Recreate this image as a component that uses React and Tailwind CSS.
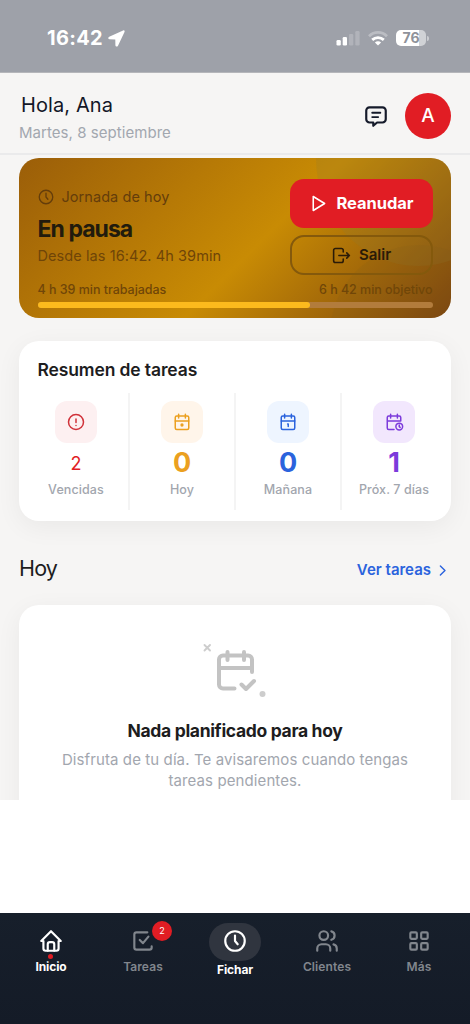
import React from 'react';
import clsx from 'clsx';

const Icon = ({ size = 24, stroke = 2, className, children }) => (
    <svg
        width={size}
        height={size}
        viewBox="0 0 24 24"
        fill="none"
        stroke="currentColor"
        strokeWidth={stroke}
        strokeLinecap="round"
        strokeLinejoin="round"
        className={clsx('shrink-0 overflow-visible', className)}
    >
        {children}
    </svg>
);

const ClockIcon = (props) => (
    <Icon {...props}>
        <circle cx="12" cy="12" r="9" />
        <path d="M12 7v5l2.5 3" />
    </Icon>
);

const StatusBar = () => (
    <div className="flex h-[73px] items-start justify-between border-b border-[#b5b6ba] bg-[#9ea1a9] pt-[25px] pr-[41px] pl-[47px] text-white">
        <div className="flex h-[26px] items-center gap-[5px]">
            <span className="text-[20px] font-bold leading-[26px] tracking-[0.3px]">16:42</span>
            <svg width="17" height="17" viewBox="0 0 17 17" fill="currentColor">
                <path d="M15.1.5 1.2 6.7C-.2 7.4-.1 9.2 1.5 9.3L7 9.5c.2 0 .3.1.3.3l.1 5.4c.1 1.6 1.9 1.9 2.6.5L16.500 1.9C17 .8 16.200 0 15.100.5Z" />
            </svg>
        </div>
        <div className="flex h-[26px] items-center">
            <svg width="24" height="16" viewBox="0 0 24 16" fill="currentColor">
                <rect x="0.5" y="10" width="4.300" height="5.500" rx="1.300" />
                <rect x="6.700" y="7" width="4.300" height="8.500" rx="1.300" />
                <rect x="13" y="4" width="4.300" height="11.500" rx="1.300" opacity=".2" />
                <rect x="19.300" y="1" width="4.300" height="14.500" rx="1.300" opacity=".2" />
            </svg>
            <svg width="20" height="15" viewBox="0 0 20 15" fill="none" stroke="currentColor" strokeWidth="2.800" className="ml-[8px]">
                <path d="M1 5.200c5.200-5 12.800-5 18 0" opacity=".3" />
                <path d="M4.200 8.900c3.400-3.100 8.200-3.100 11.600 0" />
                <path d="M10 14.500 6.900 11.500c1.800-1.600 4.400-1.600 6.200 0Z" fill="currentColor" stroke="none" />
            </svg>
            <div className="ml-[8px] flex h-[16px] w-[30px] items-center justify-center rounded-[5px] bg-[linear-gradient(90deg,#fff_76%,#d0d2d6_76%)]">
                <span className="text-[14px] font-bold leading-[16px] text-[#8f929a]">76</span>
            </div>
            <span className="ml-[1px] h-[5px] w-[2px] rounded-r-full bg-[#cbcdd1]" />
        </div>
    </div>
);

const Header = () => (
    <header className="flex h-[82px] items-center justify-between border-b-2 border-[#eaeaeb] px-[19px]">
        <div className="mt-[12px]">
            <h1 className="ml-[2px] text-[20px] leading-[27px] tracking-[0.1px] text-[#131727]">Hola, Ana</h1>
            <p className="text-[15px] leading-[27px] tracking-[0.05px] text-[#a2a7af]">Martes, 8 septiembre</p>
        </div>
        <div className="mt-[6px] flex items-center gap-[16px]">
            <Icon size={26} className="text-[#151a2a]">
                <path d="M8.500 9h7.500M8.500 13h5.500" strokeWidth="1.700" />
                <path d="M18 4a3 3 0 0 1 3 3v8a3 3 0 0 1-3 3h-5l-3.500 3v-3H6a3 3 0 0 1-3-3V7a3 3 0 0 1 3-3h12z" />
            </Icon>
            <div className="flex h-[46px] w-[46px] items-center justify-center rounded-full bg-[#e11d24] text-[19px] font-medium text-white">
                A
            </div>
        </div>
    </header>
);

const ShiftCard = () => (
    <section className="relative h-[160px] overflow-hidden rounded-[20px] bg-[linear-gradient(135deg,#9b5e09_0%,#c88b04_55%,#7c450f_100%)] pr-[18.500px] pl-[18.500px] pt-[21px]">
        {/* decorative circles */}
        <svg className="absolute inset-0" width="432" height="160" viewBox="0 0 432 160" fill="#8c7c35">
            <ellipse cx="399" cy="0" rx="102" ry="108" opacity=".21" />
            <ellipse cx="400" cy="177" rx="89" ry="90" fill="#7d5a20" opacity=".13" />
        </svg>
        <div className="relative flex justify-between">
            <div>
                <div className="mt-[7px] -ml-px flex h-[22px] items-center gap-[7px] text-[#643d0b]">
                    <ClockIcon size={18} stroke={1.8} />
                    <span className="text-[14.500px] leading-[22px] tracking-[0.06px]">Jornada de hoy</span>
                </div>
                <h2 className="mt-[7px] text-[23px] font-bold leading-[28px] tracking-[-0.95px] text-[#211b0d]">En pausa</h2>
                <p className="mt-[2px] text-[14.500px] leading-[22px] tracking-[0.08px] text-[#6f4508]">Desde las 16:42. 4h 39min</p>
            </div>
            <div className="flex w-[143px] flex-col gap-[7px]">
                <button className="flex h-[49px] items-center justify-center gap-[7px] rounded-[14px] bg-[#e11d24] text-[16.500px] font-bold tracking-[-0.05px] text-white">
                    <Icon size={21} stroke={1.8}>
                        <path d="M6 4v16l13-8z" />
                    </Icon>
                    Reanudar
                </button>
                <button className="flex h-[40px] items-center justify-center gap-[7px] rounded-[14px] border-2 border-[#84590c] pt-px text-[15px] font-semibold text-[#2a1b08]">
                    <Icon size={21} stroke={1.8}>
                        <path d="M14 8V6a2 2 0 0 0-2-2H5a2 2 0 0 0-2 2v12a2 2 0 0 0 2 2h7a2 2 0 0 0 2-2v-2" />
                        <path d="M9 12h12l-3-3M18 15l3-3" />
                    </Icon>
                    Salir
                </button>
            </div>
        </div>
        <div className="relative mt-[5px] flex justify-between text-[12.500px] font-medium leading-[20px] tracking-[-0.03px] text-[#704608]">
            <span>4 h 39 min trabajadas</span>
            <span>6 h 42 min objetivo</span>
        </div>
        <div className="relative mt-[2px] h-[6px] overflow-hidden rounded-full bg-[#b27c3c]">
            <div className="h-full rounded-r-full bg-[#fcba1d]" style={{ width: '69%' }} />
        </div>
    </section>
);

const calendarFrame = (
    <>
        <rect x="3" y="4" width="18" height="18" rx="2" />
        <path d="M16.500 1.500v5M7.500 1.500v5M3 10.500h18" />
    </>
);

const summary = [
    {
        label: 'Vencidas',
        value: 2,
        tile: 'bg-[#fdf0f1] text-[#d03139]',
        number: 'text-[18px] font-normal text-[#e11d24] pt-px',
        icon: (
            <>
                <circle cx="12" cy="12" r="10" />
                <path d="M12 8v4.500M12 16.500h.01" />
            </>
        ),
    },
    {
        label: 'Hoy',
        value: 0,
        tile: 'bg-[#fff5ea] text-[#eba020]',
        number: 'text-[27px] font-bold text-[#eba020]',
        icon: (
            <>
                {calendarFrame}
                <circle cx="12" cy="16" r="1.200" />
            </>
        ),
    },
    {
        label: 'Mañana',
        value: 0,
        tile: 'bg-[#eef5ff] text-[#2b63dd]',
        number: 'text-[27px] font-bold text-[#2b63dd]',
        icon: (
            <>
                {calendarFrame}
                <path d="M11.500 14.500h.8v3.500" />
            </>
        ),
    },
    {
        label: 'Próx. 7 días',
        value: 1,
        tile: 'bg-[#f2e7fd] text-[#7c3bdb]',
        number: 'text-[27px] font-bold text-[#7c3bdb]',
        icon: (
            <>
                <path d="M12 22H5a2 2 0 0 1-2-2V6a2 2 0 0 1 2-2h14a2 2 0 0 1 2 2v4.500M16.500 1.500v5M7.500 1.500v5M3 10.500h18" />
                <circle cx="19" cy="18" r="4.500" />
                <path d="M19 16v2.200l1.200 1" />
            </>
        ),
    },
];

const TaskSummary = () => (
    <section className="mt-[23px] h-[180px] rounded-[20px] bg-white pt-[17px] shadow-[0_6px_26px_rgba(0,0,0,0.055)]">
        <h2 className="px-[18.500px] text-[17.500px] font-semibold leading-[24px] tracking-[-0.13px] text-[#1d1d1e]">Resumen de tareas</h2>
        <div className="mt-[11px] grid grid-cols-4 pr-[5px] pl-[3px]">
            {summary.map((item, i) => (
                <div
                    key={item.label}
                    className={clsx('flex h-[117px] flex-col items-center pt-[8px]', i > 0 ? 'border-l-2 border-[#f4f4f4]' : 'pl-[2px]')}
                >
                    <div className={clsx('flex h-[42px] w-[42px] items-center justify-center rounded-[12px]', item.tile)}>
                        <Icon size={18}>{item.icon}</Icon>
                    </div>
                    <span className={clsx('mt-[5px] h-[30px] leading-[30px]', item.number)}>{item.value}</span>
                    <span className="mt-[3px] text-[12.500px] font-medium leading-[18px] tracking-[0.1px] text-[#a2a6ae]">{item.label}</span>
                </div>
            ))}
        </div>
    </section>
);

const TodaySection = () => (
    <>
        <div className="mt-[31px] flex h-[32px] items-center justify-between">
            <h2 className="text-[21.500px] leading-[30px] tracking-[-0.8px] text-[#1d1d1e]">Hoy</h2>
            <a className="mt-[4px] flex items-center gap-[3px] text-[15px] font-semibold text-[#2b63dd]">
                Ver tareas
                <Icon size={17} stroke={2}>
                    <path d="m9 5.500 6.500 6.500-6.500 6.500" />
                </Icon>
            </a>
        </div>
        <section className="mt-[21px] flex h-[260px] flex-col items-center rounded-[20px] bg-white pt-[37px] shadow-[0_6px_26px_rgba(0,0,0,0.055)]">
            <svg width="64" height="58" viewBox="0 0 64 58" fill="none" stroke="#c3c3c3" strokeLinecap="round" strokeLinejoin="round" className="shrink-0">
                <path d="m1.500 3 5.500 5.500M7 3 1.500 8.500" strokeWidth="1.900" stroke="#cdcdcd" />
                <path d="M31.500 46.500H20a4 4 0 0 1-4-4V17.500a4 4 0 0 1 4-4H45a4 4 0 0 1 4 4V30M24.500 10v8M41 10v8M16 26H49" strokeWidth="4" />
                <path d="m38.500 42.500 4.500 4.500 8-8" strokeWidth="4" />
                <circle cx="59.500" cy="52" r="3" fill="#cdcdcd" stroke="none" />
            </svg>
            <h3 className="mt-[18px] text-[17.500px] font-bold leading-[26px] tracking-[-0.33px] text-[#1d1d1e]">Nada planificado para hoy</h3>
            <p className="mt-[5px] w-[370px] text-center text-[15px] leading-[21px] tracking-[0.1px] text-[#a2a6ae]">
                Disfruta de tu día. Te avisaremos cuando tengas tareas pendientes.
            </p>
        </section>
    </>
);

const NavItem = ({ label, active, children }) => (
    <div className={clsx('relative flex w-[92px] flex-col items-center pt-[15px]', active ? 'text-white' : 'text-[#81868d]')}>
        <Icon size={26}>{children}</Icon>
        <span className={clsx('mt-[4px] text-[12px] leading-[18px]', active ? 'font-bold tracking-[-0.1px]' : 'font-semibold tracking-[0.1px]')}>{label}</span>
    </div>
);

const BottomNav = () => (
    <nav className="flex h-[111px] justify-center bg-[linear-gradient(180deg,#171f2b,#141b27)]">
        <div className="relative">
            <NavItem label="Inicio" active>
                <path d="M5 12H3l9-9 9 9h-2v7a2 2 0 0 1-2 2H7a2 2 0 0 1-2-2v-7" />
                <path d="M9 21v-6a2 2 0 0 1 2-2h2a2 2 0 0 1 2 2v6" />
            </NavItem>
            <span className="absolute top-[41px] left-[43px] h-[5px] w-[5px] rounded-full bg-[#e11d24]" />
        </div>
        <div className="relative">
            <NavItem label="Tareas">
                <path d="m9 11 3 3 5-6M20 17v1a2 2 0 0 1-2 2H6a2 2 0 0 1-2-2V6a2 2 0 0 1 2-2h10" />
            </NavItem>
            <span className="absolute top-[8px] left-[55px] flex h-[20px] w-[20px] items-center justify-center rounded-full bg-[#e11d24] text-[9px] text-white">
                2
            </span>
        </div>
        <div className="flex w-[92px] flex-col items-center pt-[10px] text-white">
            <div className="flex h-[38px] w-[52px] items-center justify-center rounded-full bg-[#30353f]">
                <ClockIcon size={26} className="-mt-[2px]" />
            </div>
            <span className="text-[12px] font-bold leading-[18px] tracking-[-0.1px]">Fichar</span>
        </div>
        <NavItem label="Clientes">
            <circle cx="9" cy="7" r="4" />
            <path d="M3 21v-2a4 4 0 0 1 4-4h4a4 4 0 0 1 4 4v2M16 3.130a4 4 0 0 1 0 7.750M21 21v-2a4 4 0 0 0-3-3.850" />
        </NavItem>
        <NavItem label="Más">
            <rect x="4" y="4" width="6" height="6" rx="1" />
            <rect x="14" y="4" width="6" height="6" rx="1" />
            <rect x="4" y="14" width="6" height="6" rx="1" />
            <rect x="14" y="14" width="6" height="6" rx="1" />
        </NavItem>
    </nav>
);

const App = () => {
    return (
        <div className="flex h-[1024px] w-[470px] flex-col overflow-hidden bg-white font-['Inter',sans-serif]">
            <div className="h-[800px] shrink-0 overflow-hidden bg-[#f6f5f4]">
                <StatusBar />
                <Header />
                <main className="px-[19px] pt-[3px]">
                    <ShiftCard />
                    <TaskSummary />
                    <TodaySection />
                </main>
            </div>
            <div className="flex-1" />
            <BottomNav />
        </div>
    );
};

export default App;
